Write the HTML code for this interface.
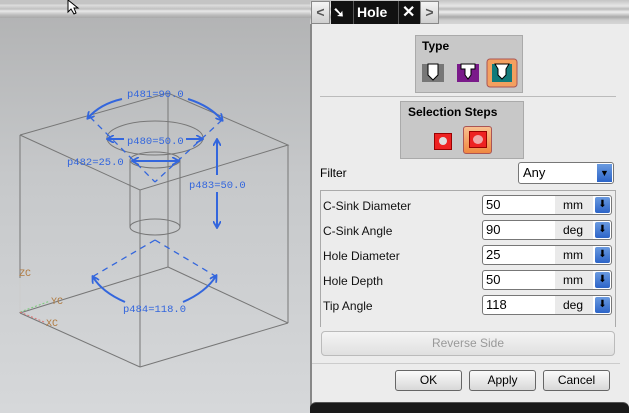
<!DOCTYPE html>
<html><head><style>
*{margin:0;padding:0;box-sizing:border-box}
body{width:629px;height:413px;overflow:hidden;position:relative;font-family:"Liberation Sans",sans-serif;font-size:12px;background:#c0c1c2}
.abs{position:absolute}
.lbl{position:absolute;left:323px;font-size:12px;color:#111}
.inp{position:absolute;left:482px;width:130px;height:20px;border:1px solid #777;border-radius:3px;background:#fff;font-size:13px;padding-left:3px;line-height:18px}
.inp .u{position:absolute;left:72px;top:0;width:38px;height:18px;background:#eaeaea;padding-left:8px;font-size:12px}
.inp .b{position:absolute;right:1px;top:1px;width:15px;height:16px;background:linear-gradient(#6a9ae0,#2c64c8);border-radius:2px;color:#000;font-size:10px;text-align:center;line-height:16px}
.btn{position:absolute;top:370px;height:21px;border:1px solid #666;border-radius:3px;background:linear-gradient(#fafafa,#d8d8d8);text-align:center;line-height:19px;font-size:12px}
</style></head><body>
<div class="abs" style="left:0;top:0;width:311px;height:18px;background:linear-gradient(#c4c4c4,#c4c4c4 4px,#dedede 5px,#c0c0c0 9px,#e8e8e8 11px,#bcbcbc 15px,#a8a8a8 18px)"></div>
<div class="abs" style="left:0;top:18px;width:311px;height:395px;background:linear-gradient(#b3b4b5,#c6c8ca 40%,#d6d8da 100%)"></div>
<svg class="abs" style="left:0;top:0" width="311" height="413">
<defs><marker id="ah" markerWidth="8" markerHeight="8" refX="6" refY="4" orient="auto" markerUnits="userSpaceOnUse"><path d="M0 0 L7 4 L0 8" fill="none" stroke="#3366dd" stroke-width="1.8"/></marker></defs>
<g stroke="#777" stroke-width="1" fill="none">
<polyline points="20,135 168,93 288,145 140,190 20,135"/>
<line x1="20" y1="135" x2="20" y2="313"/><line x1="140" y1="190" x2="140" y2="367"/><line x1="288" y1="145" x2="288" y2="323"/>
<line x1="20" y1="313" x2="140" y2="367"/><line x1="140" y1="367" x2="288" y2="323"/>
<line x1="168" y1="93" x2="168" y2="267"/><line x1="168" y1="267" x2="20" y2="313"/><line x1="168" y1="267" x2="288" y2="323"/>
<ellipse cx="155" cy="138" rx="48" ry="17"/>
<ellipse cx="155" cy="160" rx="25" ry="8"/>
<ellipse cx="155" cy="227" rx="25" ry="8"/>
<line x1="130" y1="160" x2="130" y2="227"/><line x1="180" y1="160" x2="180" y2="227"/>
</g>
<g stroke="#3366dd" stroke-width="1.3" fill="none" stroke-dasharray="6,5">
<line x1="90" y1="117" x2="155" y2="182"/><line x1="222" y1="120" x2="155" y2="182"/>
<line x1="155" y1="240" x2="92" y2="277"/><line x1="155" y1="240" x2="217" y2="277"/>
</g>
<g stroke="#3366dd" stroke-width="2" fill="none" marker-end="url(#ah)">
<path d="M122 99 Q100 104 88 118"/><path d="M188 99 Q210 106 222 120"/>
<path d="M125 302 Q102 292 93 277"/><path d="M183 302 Q206 292 216 276"/>
<line x1="124" y1="139" x2="108" y2="139"/><line x1="186" y1="139" x2="202" y2="139"/>
<line x1="155" y1="161" x2="133" y2="161"/><line x1="155" y1="161" x2="178" y2="161"/>
<line x1="217" y1="175" x2="217" y2="140"/><line x1="217" y1="192" x2="217" y2="227"/>
</g>
<g fill="#3366dd" font-family="Liberation Mono,monospace" font-size="10.5">
<text x="127" y="97">p481=90.0</text><text x="127" y="144">p480=50.0</text>
<text x="67" y="165">p482=25.0</text><text x="189" y="188">p483=50.0</text>
<text x="123" y="312">p484=118.0</text>
</g>
<g fill="#b07a40" font-family="Liberation Mono,monospace" font-size="10"><text x="19" y="276">ZC</text><text x="51" y="304">YC</text><text x="46" y="326">XC</text></g>
<line x1="20" y1="312" x2="50" y2="301" stroke="#7c7" stroke-dasharray="2,2"/><line x1="20" y1="312" x2="44" y2="322" stroke="#d77" stroke-dasharray="2,2"/>
<line x1="20" y1="278" x2="20" y2="312" stroke="#ccc"/>
<path d="M68 0 L68 12 L71 9 L74 14 L76 13 L74 8 L78 8 Z" fill="#fff" stroke="#000"/>
</svg>
<!-- dialog -->
<div class="abs" style="left:310px;top:0;width:319px;height:25px;background:linear-gradient(#c4c4c4,#e6e6e6 6px,#bbb 9px,#eee 12px,#aaa 17px,#ccc 20px,#d8d8d8 25px)"></div>
<div class="abs" style="left:311px;top:1px;width:19px;height:23px;background:linear-gradient(#f4f4f4,#cfcfcf);border:1px solid #888;color:#555;font-weight:bold;text-align:center;line-height:21px;font-size:14px">&lt;</div>
<div class="abs" style="left:331px;top:1px;width:89px;height:23px;background:#111"></div>
<div class="abs" style="left:333px;top:1px;color:#fff;font-size:14px;font-weight:bold;line-height:23px">➘</div>
<div class="abs" style="left:353px;top:1px;width:1px;height:23px;background:#555"></div>
<div class="abs" style="left:357px;top:1px;color:#fff;font-size:14px;font-weight:bold;line-height:23px">Hole</div>
<div class="abs" style="left:398px;top:1px;width:1px;height:23px;background:#555"></div>
<div class="abs" style="left:402px;top:1px;color:#fff;font-size:16px;font-weight:bold;line-height:23px">✕</div>
<div class="abs" style="left:420px;top:1px;width:19px;height:23px;background:linear-gradient(#f4f4f4,#cfcfcf);border:1px solid #888;color:#555;font-weight:bold;text-align:center;line-height:21px;font-size:14px">&gt;</div>
<div class="abs" style="left:310px;top:24px;width:319px;height:389px;background:#ececec;border-left:2px solid #888"></div>
<div class="abs" style="left:415px;top:35px;width:108px;height:58px;background:#c8c8c8;border:1px solid #aaa"></div>
<div class="abs" style="left:422px;top:39px;font-weight:bold;font-size:12px">Type</div>
<svg class="abs" style="left:420px;top:58px" width="100" height="30">
<rect x="2" y="6" width="22" height="18" fill="#777"/><path d="M8 6 V17 L13 22 L18 17 V6 Z" fill="#fff" stroke="#000"/>
<rect x="37" y="6" width="22" height="18" fill="#7a1a8a"/><path d="M41 6 H55 V11 H51 V17 L48 21 L45 17 V11 H41 Z" fill="#fff" stroke="#000"/>
<rect x="67" y="1" width="30" height="28" rx="3" fill="#f3a060" stroke="#a55"/>
<rect x="72" y="6" width="20" height="18" fill="#127a7a"/><path d="M75 6 H89 L86 11 V17 L82 21 L78 17 V11 Z" fill="#fff" stroke="#000"/>
</svg>
<div class="abs" style="left:320px;top:96px;width:296px;height:1px;background:#bbb"></div>
<div class="abs" style="left:400px;top:101px;width:124px;height:58px;background:#c8c8c8;border:1px solid #aaa"></div>
<div class="abs" style="left:408px;top:105px;font-weight:bold;font-size:12px">Selection Steps</div>
<div class="abs" style="left:434px;top:133px;width:18px;height:17px;background:#e22;border:1px solid #900"></div>
<div class="abs" style="left:439px;top:137px;width:8px;height:8px;background:#ddd;border-radius:50%"></div>
<div class="abs" style="left:463px;top:126px;width:29px;height:28px;background:linear-gradient(#f8c090,#f08840);border:1px solid #a55;border-radius:3px"></div>
<div class="abs" style="left:469px;top:131px;width:18px;height:17px;background:#e22;border:1px solid #900"></div>
<div class="abs" style="left:473px;top:135px;width:10px;height:9px;background:#eaa;border-radius:50%"></div>
<div class="abs" style="left:320px;top:166px;font-size:12px">Filter</div>
<div class="abs" style="left:518px;top:162px;width:96px;height:22px;background:#fff;border:1px solid #777;border-radius:3px;font-size:13px;padding-left:4px;line-height:20px">Any<div style="position:absolute;right:1px;top:1px;width:15px;height:18px;background:linear-gradient(#6a9ae0,#2c64c8);color:#000;font-size:9px;text-align:center;line-height:18px">▼</div></div>
<div class="abs" style="left:320px;top:190px;width:296px;height:137px;border:1px solid #aaa;border-bottom:none"></div>
<div class="lbl" style="top:199px">C-Sink Diameter</div><div class="inp" style="top:195px">50<div class="u">mm</div><div class="b">⬇</div></div>
<div class="lbl" style="top:224px">C-Sink Angle</div><div class="inp" style="top:220px">90<div class="u">deg</div><div class="b">⬇</div></div>
<div class="lbl" style="top:249px">Hole Diameter</div><div class="inp" style="top:245px">25<div class="u">mm</div><div class="b">⬇</div></div>
<div class="lbl" style="top:274px">Hole Depth</div><div class="inp" style="top:270px">50<div class="u">mm</div><div class="b">⬇</div></div>
<div class="lbl" style="top:299px">Tip Angle</div><div class="inp" style="top:295px">118<div class="u">deg</div><div class="b">⬇</div></div>
<div class="abs" style="left:321px;top:331px;width:294px;height:25px;border:1px solid #bbb;border-radius:4px;background:linear-gradient(#f4f4f4,#e0e0e0);text-align:center;line-height:23px;color:#999">Reverse Side</div>
<div class="abs" style="left:312px;top:363px;width:308px;height:1px;background:#ccc"></div>
<div class="btn" style="left:395px;width:67px">OK</div>
<div class="btn" style="left:469px;width:67px">Apply</div>
<div class="btn" style="left:543px;width:67px">Cancel</div>
<div class="abs" style="left:310px;top:402px;width:319px;height:11px;background:#1a1a1a;border-radius:6px 6px 0 0;border-top:1px solid #555"></div>
</body></html>
